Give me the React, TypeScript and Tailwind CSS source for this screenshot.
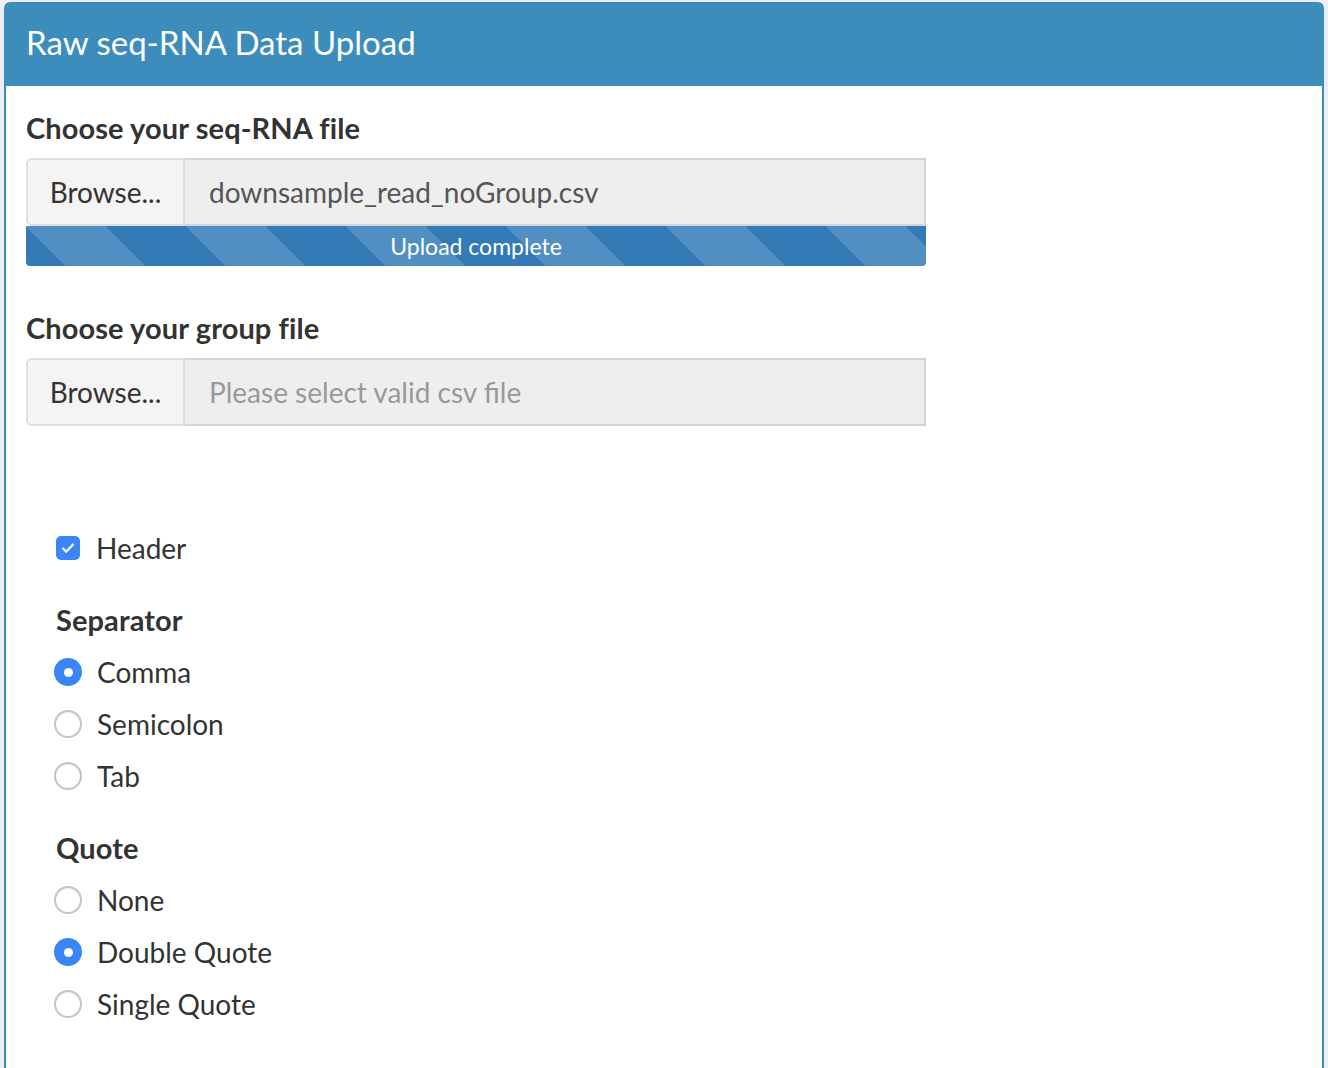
import React from 'react';

const font = { fontFamily: 'Lato, "Open Sans", "Liberation Sans", sans-serif' };

function FileInput({ value, placeholder }: { value?: string; placeholder?: string }) {
  return (
    <div className="flex h-[68px] w-[900px]">
      <div className="flex w-[159px] items-center justify-center rounded-tl-[6px] rounded-bl-[6px] border-2 border-[#dcdfe4] bg-[#f4f4f4] text-[28px] text-[#333]">
        Browse...
      </div>
      <div className="flex flex-1 items-center border-2 border-l-0 border-[#d2d6de] bg-[#eeeeee] pl-[24px] text-[28px]">
        {value ? (
          <span className="text-[#555]">{value}</span>
        ) : (
          <span className="text-[#999]">{placeholder}</span>
        )}
      </div>
    </div>
  );
}

function Radio({ label, checked }: { label: string; checked?: boolean }) {
  return (
    <div className="flex h-[52px] items-center">
      {checked ? (
        <div className="ml-[-2px] flex h-[28px] w-[28px] items-center justify-center rounded-full bg-[#3a86f7]">
          <div className="h-[9px] w-[9px] rounded-full bg-white" />
        </div>
      ) : (
        <div className="ml-[-2px] h-[28px] w-[28px] rounded-full border-2 border-[#c4c4c4] bg-white shadow-[inset_0_1px_1px_rgba(0,0,0,0.08)]" />
      )}
      <span className="ml-[15px] text-[28px] text-[#333]">{label}</span>
    </div>
  );
}

export default function App() {
  return (
    <div className="min-h-screen bg-[#ecf0f5] px-[4px] pt-[2px]" style={font}>
      <div className="rounded-t-[6px] bg-white">
        {/* Header */}
        <div className="flex h-[84px] items-center rounded-t-[6px] bg-[#3c8dbc] pb-[2px] pl-[22px]">
          <h1 className="text-[33px] text-white">Raw seq-RNA Data Upload</h1>
        </div>

        <div className="h-[982px] border-x-2 border-[#3c8dbc] px-[20px] pt-[22px]">
          <div className="flex h-[40px] items-center text-[29px] font-bold tracking-[0.1px] text-[#333]">Choose your seq-RNA file</div>
          <div className="mt-[10px]">
            <FileInput value="downsample_read_noGroup.csv" />
            <div
              className="flex h-[40px] w-[900px] items-center justify-center rounded-b-[4px] bg-[#337ab7] text-[23px] text-white"
              style={{
                backgroundImage:
                  'linear-gradient(45deg, rgba(255,255,255,.15) 25%, transparent 25%, transparent 50%, rgba(255,255,255,.15) 50%, rgba(255,255,255,.15) 75%, transparent 75%, transparent)',
                backgroundSize: '160px 160px',
              }}
            >
              Upload complete
            </div>
          </div>

          <div className="mt-[42px] flex h-[40px] items-center text-[29px] font-bold tracking-[0.1px] text-[#333]">Choose your group file</div>
          <div className="mt-[10px]">
            <FileInput placeholder="Please select valid csv file" />
          </div>

          <div className="ml-[30px] mt-[102px]">
            <div className="flex h-[40px] items-center">
              <div className="flex h-[24px] w-[24px] items-center justify-center rounded-[5px] bg-[#3a86f7]">
                <svg width="16" height="16" viewBox="0 0 16 16" fill="none">
                  <path d="M3 8.5l3.2 3.2L13 4.5" stroke="white" strokeWidth="2.2" strokeLinecap="round" strokeLinejoin="round" />
                </svg>
              </div>
              <span className="ml-[16px] text-[28px] text-[#333]">Header</span>
            </div>

            <div className="mt-[32px] flex h-[40px] items-center text-[29px] font-bold tracking-[0.1px] text-[#333]">Separator</div>
            <div className="mt-[6px]">
              <Radio label="Comma" checked />
              <Radio label="Semicolon" />
              <Radio label="Tab" />
            </div>

            <div className="mt-[26px] flex h-[40px] items-center text-[29px] font-bold tracking-[0.1px] text-[#333]">Quote</div>
            <div className="mt-[6px]">
              <Radio label="None" />
              <Radio label="Double Quote" checked />
              <Radio label="Single Quote" />
            </div>
          </div>
        </div>
      </div>
    </div>
  );
}
